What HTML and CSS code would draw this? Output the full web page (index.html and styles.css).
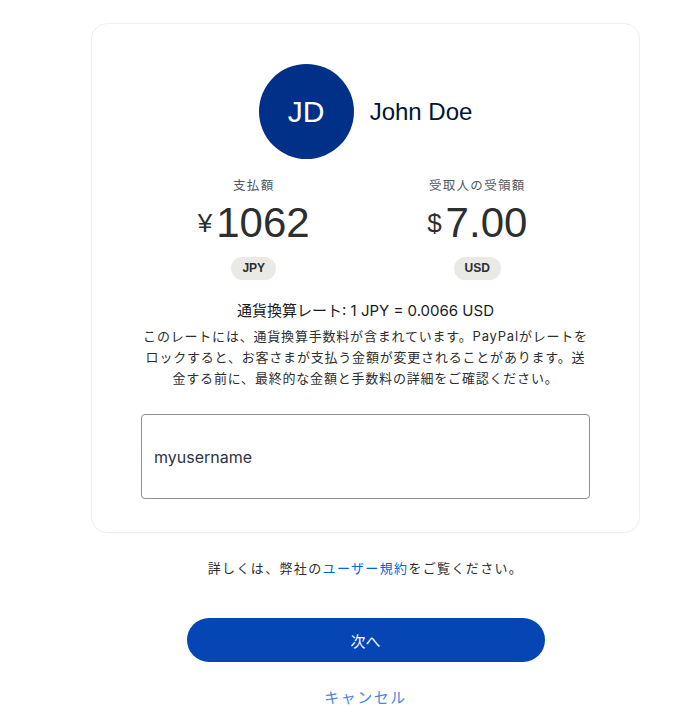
FILE: index.html
```html
<!DOCTYPE html>
<html lang="ja">
<head>
<meta charset="utf-8">
<link rel="stylesheet" href="styles.css">
</head>
<body>
<main class="page">
  <section class="card">
    <div class="payee">
      <div class="avatar">JD</div>
      <div class="name">John Doe</div>
    </div>
    <div class="amounts">
      <div class="amount-col">
        <div class="label">支払額</div>
        <div class="amount"><span class="sym">¥</span>1062</div>
        <div class="pill">JPY</div>
      </div>
      <div class="amount-col">
        <div class="label">受取人の受領額</div>
        <div class="amount"><span class="sym">$</span>7.00</div>
        <div class="pill">USD</div>
      </div>
    </div>
    <p class="rate">通貨換算レート: 1 JPY = 0.0066 USD</p>
    <p class="desc">このレートには、通貨換算手数料が含まれています。PayPalがレートを<br>ロックすると、お客さまが支払う金額が変更されることがあります。送<br>金する前に、最終的な金額と手数料の詳細をご確認ください。</p>
    <div class="field">myusername</div>
  </section>
  <p class="terms">詳しくは、弊社の<a class="link" href="#">ユーザー規約</a>をご覧ください。</p>
  <button class="next">次へ</button>
  <a class="cancel" href="#">キャンセル</a>
</main>
</body>
</html>
```
FILE: styles.css
```css
html, body {
  margin: 0;
  padding: 0;
  background: #ffffff;
}
body {
  font-family: "Liberation Sans", "Noto Sans CJK JP", sans-serif;
  color: #2c2e2f;
}
.page {
  width: 549px;
  margin-left: 91px;
  padding-top: 23px;
  display: flex;
  flex-direction: column;
  align-items: center;
}
.card {
  box-sizing: border-box;
  width: 549px;
  border: 1px solid #eeeeee;
  border-radius: 16px;
  padding: 40px 50px 33px;
  display: flex;
  flex-direction: column;
  align-items: center;
}
.payee {
  display: flex;
  align-items: center;
  gap: 16px;
}
.avatar {
  width: 95px;
  height: 95px;
  border-radius: 50%;
  background: #003087;
  color: #ffffff;
  font-size: 30px;
  display: flex;
  align-items: center;
  justify-content: center;
}
.name {
  font-size: 24px;
  color: #001435;
  padding-top: 1px;
}
.amounts {
  margin-top: 17px;
  width: 100%;
  display: grid;
  grid-template-columns: 1fr 1fr;
}
.amount-col {
  display: flex;
  flex-direction: column;
  align-items: center;
}
.label {
  font-family: "Noto Sans CJK JP", sans-serif;
  font-size: 12.5px;
  line-height: 18px;
  letter-spacing: 1.3px;
  color: #515a63;
}
.amount {
  margin-top: 5px;
  font-size: 42px;
  line-height: 48px;
  color: #2c2e2f;
  display: flex;
  align-items: flex-start;
}
.sym {
  font-size: 26px;
  line-height: 26px;
  margin-top: 11px;
  margin-right: 4px;
}
.pill {
  margin-top: 10px;
  height: 23px;
  padding: 0 11px;
  border-radius: 12px;
  background: #ebe9e5;
  font-size: 12px;
  font-weight: bold;
  line-height: 23px;
  color: #2c2e2f;
}
.rate {
  margin: 20px 0 0;
  font-family: "Inter", "Noto Sans CJK JP", sans-serif;
  font-size: 15px;
  line-height: 22px;
  color: #1a1c1e;
}
.desc {
  margin: 4px 0 0;
  font-family: "Inter", "Noto Sans CJK JP", sans-serif;
  font-size: 13px;
  line-height: 21px;
  letter-spacing: 0.8px;
  text-align: center;
  white-space: nowrap;
  color: #2c2e2f;
}
.field {
  box-sizing: border-box;
  margin-top: 25px;
  width: 449px;
  height: 85px;
  border: 1px solid #8c8f9a;
  border-radius: 4px;
  padding: 0 12px;
  display: flex;
  align-items: center;
  font-family: "Inter", sans-serif;
  font-size: 16px;
  color: #2e3445;
}
.terms {
  margin: 25px 0 0;
  font-family: "Noto Sans CJK JP", sans-serif;
  font-size: 13px;
  line-height: 20px;
  letter-spacing: 1.35px;
  color: #2c2e2f;
}
.link {
  color: #0066d6;
  text-decoration: none;
}
.next {
  margin-top: 40px;
  width: 358px;
  height: 44px;
  border: none;
  border-radius: 22px;
  background: #0546b4;
  color: #ffffff;
  font-family: "Noto Sans CJK JP", sans-serif;
  font-size: 15px;
  padding: 0;
}
.cancel {
  margin-top: 25px;
  font-family: "Noto Sans CJK JP", sans-serif;
  font-size: 15px;
  line-height: 20px;
  letter-spacing: 1.5px;
  color: #4a86e0;
  text-decoration: none;
}
```
